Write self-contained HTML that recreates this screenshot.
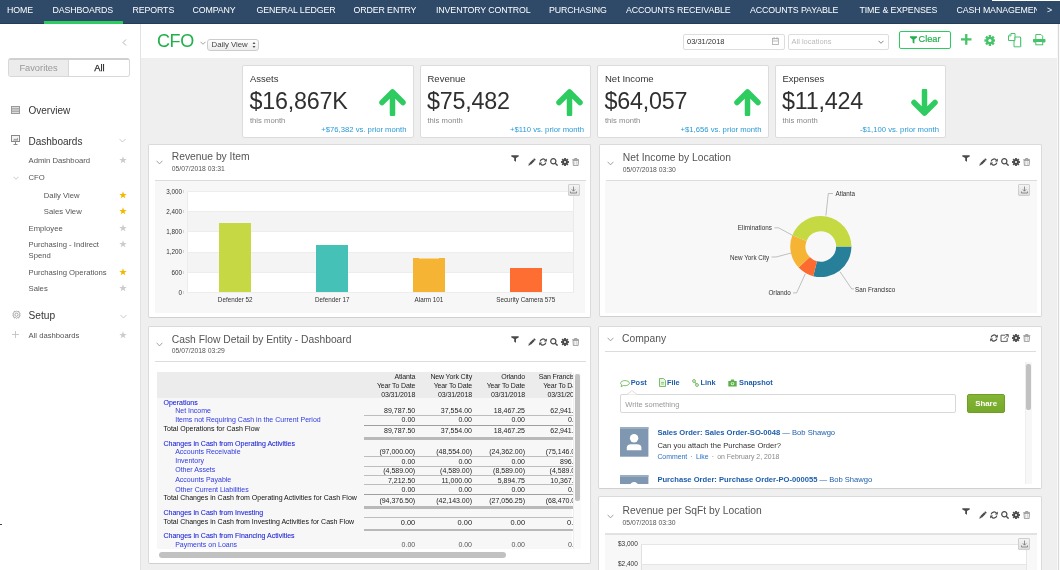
<!DOCTYPE html>
<html><head><meta charset="utf-8">
<style>
*{box-sizing:border-box;margin:0;padding:0}
html,body{width:1060px;height:570px;overflow:hidden;background:#fff;font-family:"Liberation Sans",sans-serif;color:#333}
.abs{position:absolute}
#nav{position:absolute;left:0;top:0;width:1060px;height:24px;background:#2e4a68;border-bottom:1px solid #233c58}
#nav span{position:absolute;top:5px;color:#fff;font-size:8.8px;line-height:10px;white-space:nowrap;letter-spacing:-0.1px}
#navline{position:absolute;left:44px;top:21px;width:79px;height:3px;background:#2ecc60}
#side{position:absolute;left:0;top:24px;width:141px;height:546px;background:#fff;border-right:1px solid #e3e3e3}
#head{position:absolute;left:141px;top:24px;width:919px;height:34px;background:#fff}
#content{position:absolute;left:141px;top:58px;width:919px;height:512px;background:#efefef}
.card{position:absolute;top:65px;width:171.5px;height:73px;background:#fff;border:1px solid #dcdcdc;border-radius:2px}
.card .t{position:absolute;left:7px;top:8px;font-size:9.5px;line-height:1;color:#333}
.card .v{position:absolute;left:6.5px;top:21.8px;font-size:23.3px;color:#303030;letter-spacing:-0.2px}
.card .m{position:absolute;left:7px;top:49.5px;font-size:7.65px;color:#888}
.card .c{position:absolute;right:6px;top:58.5px;font-size:7.7px;color:#2a9ad6;white-space:nowrap}
.card svg{position:absolute;left:135.8px;top:22.5px}
.panel{position:absolute;background:#fff;border:1px solid #dcdcdc;border-radius:2px}
.ptitle{position:absolute;left:24px;top:7px;font-size:11px;color:#555;white-space:nowrap}
.pdate{position:absolute;left:24px;top:20px;font-size:7px;color:#555;white-space:nowrap}
.sep{position:absolute;height:1px;background:#dedede}
</style></head><body><div id="wrap" style="position:absolute;left:0;top:0;width:1060px;height:570px;overflow:hidden;will-change:transform">
<div id="nav">
<span style="left:7px">HOME</span>
<span style="left:52.5px">DASHBOARDS</span>
<span style="left:132.5px">REPORTS</span>
<span style="left:192.5px">COMPANY</span>
<span style="left:256.5px">GENERAL LEDGER</span>
<span style="left:353.5px">ORDER ENTRY</span>
<span style="left:436px">INVENTORY CONTROL</span>
<span style="left:549px">PURCHASING</span>
<span style="left:626px">ACCOUNTS RECEIVABLE</span>
<span style="left:750px">ACCOUNTS PAYABLE</span>
<span style="left:859.5px">TIME &amp; EXPENSES</span>
<span style="left:956.5px;width:80px;overflow:hidden">CASH MANAGEMENT</span>
<span style="left:1047px">&gt;</span>
<div id="navline"></div>
</div>
<div id="side">
<svg class="abs" style="left:122px;top:15px" width="5" height="7" viewBox="0 0 5 7"><path d="M4 0.5L1 3.5L4 6.5" fill="none" stroke="#aaa" stroke-width="0.9"/></svg>
<div class="abs" style="left:8px;top:34px;width:122px;height:18.7px;border:1px solid #d8d8d8;border-top:2px solid #d0d0d0;border-radius:3px;overflow:hidden">
 <div class="abs" style="left:0;top:0;width:60px;height:16px;background:#ececec;border-right:1px solid #d8d8d8;color:#999;font-size:9.3px;text-align:center;line-height:16.5px">Favorites</div>
 <div class="abs" style="left:60px;top:0;width:61px;height:16px;background:#fff;color:#222;font-size:9.3px;text-align:center;line-height:16.5px;-webkit-text-stroke:0.25px #222">All</div>
</div>
<svg class="abs" style="left:11px;top:82px" width="9" height="8" viewBox="0 0 9 8"><rect x="0.5" y="0.5" width="8" height="7" fill="#ddd" stroke="#999"/><path d="M1 2.5H8M1 4H8M1 5.5H8" stroke="#999" stroke-width="0.7"/></svg>
<div class="abs" style="left:28.5px;top:82.3px;font-size:10px;line-height:1;color:#333;white-space:nowrap;">Overview</div>
<svg class="abs" style="left:11px;top:111px" width="9" height="10" viewBox="0 0 9 10"><rect x="0.5" y="0.5" width="8" height="6" fill="#f4f4f4" stroke="#888"/><path d="M2 5L4 3.5L5 4.5L7 2.5V5.5H2Z" fill="#999"/><path d="M4.5 6.5V9.5M2.5 9.5H6.5" stroke="#888"/></svg>
<div class="abs" style="left:28.5px;top:112.6px;font-size:10px;line-height:1;color:#333;white-space:nowrap;">Dashboards</div>
<svg class="abs" style="left:119px;top:114px" width="7" height="5" viewBox="0 0 7 5"><path d="M0.5 1L3.5 4L6.5 1" fill="none" stroke="#bbb" stroke-width="0.8"/></svg>
<div class="abs" style="left:28.5px;top:132.9px;font-size:7.7px;line-height:1;color:#555;white-space:nowrap;">Admin Dashboard</div>
<svg class="abs" style="left:118.5px;top:132.0px" width="8" height="8" viewBox="0 0 10 10"><path d="M5 0.3L6.2 3.6L9.7 3.7L6.9 5.8L7.9 9.2L5 7.2L2.1 9.2L3.1 5.8L0.3 3.7L3.8 3.6Z" fill="#ccc"/></svg>
<div class="abs" style="left:28.5px;top:149.7px;font-size:7.7px;line-height:1;color:#555;white-space:nowrap;">CFO</div>
<div class="abs" style="left:43.8px;top:168.1px;font-size:7.7px;line-height:1;color:#555;white-space:nowrap;">Daily View</div>
<svg class="abs" style="left:118.5px;top:167.2px" width="8" height="8" viewBox="0 0 10 10"><path d="M5 0.3L6.2 3.6L9.7 3.7L6.9 5.8L7.9 9.2L5 7.2L2.1 9.2L3.1 5.8L0.3 3.7L3.8 3.6Z" fill="#f5b800"/></svg>
<div class="abs" style="left:43.8px;top:184.2px;font-size:7.7px;line-height:1;color:#555;white-space:nowrap;">Sales View</div>
<svg class="abs" style="left:118.5px;top:183.3px" width="8" height="8" viewBox="0 0 10 10"><path d="M5 0.3L6.2 3.6L9.7 3.7L6.9 5.8L7.9 9.2L5 7.2L2.1 9.2L3.1 5.8L0.3 3.7L3.8 3.6Z" fill="#f5b800"/></svg>
<div class="abs" style="left:28.5px;top:200.9px;font-size:7.7px;line-height:1;color:#555;white-space:nowrap;">Employee</div>
<svg class="abs" style="left:118.5px;top:200.0px" width="8" height="8" viewBox="0 0 10 10"><path d="M5 0.3L6.2 3.6L9.7 3.7L6.9 5.8L7.9 9.2L5 7.2L2.1 9.2L3.1 5.8L0.3 3.7L3.8 3.6Z" fill="#ccc"/></svg>
<div class="abs" style="left:28.5px;top:217.3px;font-size:7.7px;line-height:1;color:#555;white-space:nowrap;">Purchasing - Indirect</div>
<svg class="abs" style="left:118.5px;top:216.4px" width="8" height="8" viewBox="0 0 10 10"><path d="M5 0.3L6.2 3.6L9.7 3.7L6.9 5.8L7.9 9.2L5 7.2L2.1 9.2L3.1 5.8L0.3 3.7L3.8 3.6Z" fill="#ccc"/></svg>
<div class="abs" style="left:28.5px;top:228.1px;font-size:7.7px;line-height:1;color:#555;white-space:nowrap;">Spend</div>
<div class="abs" style="left:28.5px;top:245.1px;font-size:7.7px;line-height:1;color:#555;white-space:nowrap;">Purchasing Operations</div>
<svg class="abs" style="left:118.5px;top:244.2px" width="8" height="8" viewBox="0 0 10 10"><path d="M5 0.3L6.2 3.6L9.7 3.7L6.9 5.8L7.9 9.2L5 7.2L2.1 9.2L3.1 5.8L0.3 3.7L3.8 3.6Z" fill="#f5b800"/></svg>
<div class="abs" style="left:28.5px;top:261.2px;font-size:7.7px;line-height:1;color:#555;white-space:nowrap;">Sales</div>
<svg class="abs" style="left:118.5px;top:260.3px" width="8" height="8" viewBox="0 0 10 10"><path d="M5 0.3L6.2 3.6L9.7 3.7L6.9 5.8L7.9 9.2L5 7.2L2.1 9.2L3.1 5.8L0.3 3.7L3.8 3.6Z" fill="#ccc"/></svg>
<svg class="abs" style="left:13px;top:152px" width="6" height="4" viewBox="0 0 6 4"><path d="M0.5 0.8L3 3.3L5.5 0.8" fill="none" stroke="#bbb" stroke-width="0.8"/></svg>
<svg class="abs" style="left:11.5px;top:286px" width="9" height="9" viewBox="0 0 9 9"><path d="M4.5 0.8L5.4 1.8L6.8 1.4L7 2.8L8.2 3.6L7.5 4.8L8.2 6L7 6.6L6.8 8L5.4 7.6L4.5 8.4L3.6 7.6L2.2 8L2 6.6L0.8 6L1.5 4.8L0.8 3.6L2 2.8L2.2 1.4L3.6 1.8Z" fill="none" stroke="#888" stroke-width="0.7"/><circle cx="4.5" cy="4.7" r="1.6" fill="none" stroke="#888" stroke-width="0.7"/></svg>
<div class="abs" style="left:28.5px;top:287.2px;font-size:10.2px;line-height:1;color:#333;white-space:nowrap;">Setup</div>
<svg class="abs" style="left:120px;top:290px" width="7" height="5" viewBox="0 0 7 5"><path d="M0.5 1L3.5 4L6.5 1" fill="none" stroke="#bbb" stroke-width="0.8"/></svg>
<svg class="abs" style="left:12px;top:306.5px" width="7" height="7" viewBox="0 0 7 7"><path d="M3.5 0V7M0 3.5H7" stroke="#bbb" stroke-width="0.8"/></svg>
<div class="abs" style="left:28.5px;top:307.7px;font-size:7.7px;line-height:1;color:#555;white-space:nowrap;">All dashboards</div>
<svg class="abs" style="left:118.5px;top:306.8px" width="8" height="8" viewBox="0 0 10 10"><path d="M5 0.3L6.2 3.6L9.7 3.7L6.9 5.8L7.9 9.2L5 7.2L2.1 9.2L3.1 5.8L0.3 3.7L3.8 3.6Z" fill="#ccc"/></svg>

</div>
<div id="head">
<div class="abs" style="left:16px;top:8px;font-size:18px;line-height:1;color:#1fb14a;letter-spacing:-0.4px">CFO</div>
<svg class="abs" style="left:59px;top:17px" width="6" height="4" viewBox="0 0 6 4"><path d="M0.5 0.8L3 3.3L5.5 0.8" fill="none" stroke="#888" stroke-width="0.8"/></svg>
<div class="abs" style="left:66px;top:15px;width:52px;height:12px;border:1px solid #ccc;border-radius:3px;background:linear-gradient(#fdfdfd,#eee);font-size:7.8px;line-height:10px;color:#444;padding-left:3.5px">Daily View</div>
<svg class="abs" style="left:111px;top:17px" width="4" height="8" viewBox="0 0 4 8"><path d="M0.5 3L2 1L3.5 3ZM0.5 5L2 7L3.5 5Z" fill="#555"/></svg>
<div class="abs" style="left:542px;top:9.5px;width:102px;height:16px;border:1px solid #ddd;border-radius:2px;background:#fff;font-size:7.5px;line-height:14px;color:#333;padding-left:3px">03/31/2018</div>
<svg class="abs" style="left:631px;top:13px" width="7" height="8" viewBox="0 0 7 8"><rect x="0.5" y="1.5" width="6" height="6" fill="none" stroke="#aaa" stroke-width="0.8"/><path d="M2 0V2.5M5 0V2.5M1 4H6" stroke="#aaa" stroke-width="0.8"/></svg>
<div class="abs" style="left:646.5px;top:9.5px;width:101px;height:16px;border:1px solid #ddd;border-radius:2px;background:#fff;font-size:7.5px;line-height:14px;color:#bbb;padding-left:3px">All locations</div>
<svg class="abs" style="left:737px;top:16px" width="6" height="4" viewBox="0 0 6 4"><path d="M0.5 0.8L3 3.3L5.5 0.8" fill="none" stroke="#777" stroke-width="0.9"/></svg>
<div class="abs" style="left:757.5px;top:6.5px;width:52px;height:18.5px;border:1.5px solid #2ecc60;border-radius:2px;background:#fff"></div>
<svg class="abs" style="left:768.5px;top:11.5px" width="7" height="8" viewBox="0 0 7 8"><path d="M0 0.2H7V1.6L4.4 3.6V7.8L2.6 6.6V3.6L0 1.6Z" fill="#1fb14a"/></svg>
<div class="abs" style="left:777.5px;top:11px;font-size:9.2px;line-height:1;color:#22b34c;-webkit-text-stroke:0.2px #22b34c">Clear</div>
<svg class="abs" style="left:820px;top:10.3px" width="10.5" height="10.7" viewBox="0 0 10.5 10.7"><path d="M5.25 0V10.7M0 5.35H10.5" stroke="#45c46a" stroke-width="2.3"/></svg>
<svg class="abs" style="left:842.5px;top:10.6px" width="11.8" height="11" viewBox="0 0 12 12"><g fill="#45c46a"><circle cx="6" cy="6" r="4.2"/><rect x="4.7" y="0" width="2.6" height="12"/><rect x="0" y="4.7" width="12" height="2.6"/><rect x="4.7" y="0" width="2.6" height="12" transform="rotate(45 6 6)"/><rect x="4.7" y="0" width="2.6" height="12" transform="rotate(-45 6 6)"/></g><circle cx="6" cy="6" r="1.7" fill="#fff"/></svg>
<svg class="abs" style="left:866.5px;top:9px" width="14.5" height="14.5" viewBox="0 0 14.5 14.5"><g fill="#fff" stroke="#45c46a" stroke-width="1"><path d="M3 0.5H7V7.5H0.5V3Z"/><path d="M7 4H12.5V13.8H6V8L7 7.5Z"/></g><path d="M3 0.5V3H0.5" fill="none" stroke="#45c46a" stroke-width="0.8"/><path d="M13.3 5V14" stroke="#b8e6c6" stroke-width="0.8"/></svg>
<svg class="abs" style="left:892px;top:10.3px" width="12.5" height="11.3" viewBox="0 0 12.5 11.3"><path d="M2.8 5V0.5H8L9.7 2.2V5" fill="#fff" stroke="#45c46a" stroke-width="1"/><rect x="0" y="5" width="12.5" height="3.4" rx="0.8" fill="#45c46a"/><rect x="2.8" y="7.5" width="6.9" height="3.3" fill="#fff" stroke="#45c46a" stroke-width="1"/></svg>
</div>
<div id="content"></div>
<div class="card" style="left:242px"><div class="t">Assets</div><div class="v">$16,867K</div><div class="m">this month</div><div class="c">+$76,382 vs. prior month</div><svg width="27" height="27" viewBox="0 0 27 27"><path d="M13.5 3L3 13.5M13.5 3L24 13.5M13.5 3V25" fill="none" stroke="#2ecc60" stroke-width="5.5" stroke-linecap="round" stroke-linejoin="round"/></svg></div>
<div class="card" style="left:419.5px"><div class="t">Revenue</div><div class="v">$75,482</div><div class="m">this month</div><div class="c">+$110 vs. prior month</div><svg width="27" height="27" viewBox="0 0 27 27"><path d="M13.5 3L3 13.5M13.5 3L24 13.5M13.5 3V25" fill="none" stroke="#2ecc60" stroke-width="5.5" stroke-linecap="round" stroke-linejoin="round"/></svg></div>
<div class="card" style="left:597px"><div class="t">Net Income</div><div class="v">$64,057</div><div class="m">this month</div><div class="c">+$1,656 vs. prior month</div><svg width="27" height="27" viewBox="0 0 27 27"><path d="M13.5 3L3 13.5M13.5 3L24 13.5M13.5 3V25" fill="none" stroke="#2ecc60" stroke-width="5.5" stroke-linecap="round" stroke-linejoin="round"/></svg></div>
<div class="card" style="left:774.5px"><div class="t">Expenses</div><div class="v">$11,424</div><div class="m">this month</div><div class="c">-$1,100 vs. prior month</div><svg width="27" height="27" viewBox="0 0 27 27"><path d="M13.5 24L3 13.5M13.5 24L24 13.5M13.5 24V2" fill="none" stroke="#2ecc60" stroke-width="5.5" stroke-linecap="round" stroke-linejoin="round"/></svg></div>
<!--PANELS-->
<div class="abs" style="left:147.5px;top:143.5px;width:443.8px;height:174.0px;background:#fff;border:1px solid #dadada;border-bottom-color:#d0d0d0;border-radius:2px"></div>
<svg class="abs" style="left:156.0px;top:160.1px" width="7" height="5" viewBox="0 0 7 5"><path d="M0.6 0.8L3.5 3.9L6.4 0.8" fill="none" stroke="#888" stroke-width="0.8"/></svg>
<div class="abs" style="left:171.8px;top:152.4px;font-size:10.3px;line-height:1;color:#555;white-space:nowrap;">Revenue by Item</div>
<div class="abs" style="left:171.8px;top:166.4px;font-size:6.8px;line-height:1;color:#555;white-space:nowrap;">05/07/2018 03:31</div>
<div class="abs" style="left:154.5px;top:180.0px;width:431.3px;height:1.0px;background:#dcdcdc"></div>
<svg class="abs" style="left:511.3px;top:155.0px" width="8" height="7" viewBox="0 0 8 7"><path d="M0.3 0.2H7.7V1.6L5 3V6.8L3.2 5.8V3L0.3 1.6Z" fill="#4a4a4a"/></svg>
<svg class="abs" style="left:527.8px;top:158.0px" width="8" height="8" viewBox="0 0 8 8"><path d="M6.2 0.2L7.8 1.8L2.8 6.8L0.2 7.8L1.2 5.2Z" fill="#4a4a4a"/><path d="M1.3 5.3L2.7 6.7M5.2 1.2L6.8 2.8" stroke="#fff" stroke-width="0.45"/></svg>
<svg class="abs" style="left:538.8px;top:158.0px" width="8" height="8" viewBox="0 0 8 8"><path d="M1.2 3.3A2.9 2.9 0 0 1 6.4 2.2" fill="none" stroke="#4a4a4a" stroke-width="1.3"/><path d="M7.8 0.6V3.6H4.8Z" fill="#4a4a4a"/><path d="M6.8 4.7A2.9 2.9 0 0 1 1.6 5.8" fill="none" stroke="#4a4a4a" stroke-width="1.3"/><path d="M0.2 7.4V4.4H3.2Z" fill="#4a4a4a"/></svg>
<svg class="abs" style="left:549.8px;top:158.0px" width="8" height="8" viewBox="0 0 8 8"><circle cx="3.3" cy="3.3" r="2.6" fill="none" stroke="#4a4a4a" stroke-width="1.2"/><path d="M5.2 5.2L7.6 7.6" stroke="#4a4a4a" stroke-width="1.4"/></svg>
<svg class="abs" style="left:560.8px;top:158.0px" width="8" height="8" viewBox="0 0 8 8"><g fill="#4a4a4a"><circle cx="4" cy="4" r="2.6"/><rect x="3.1" y="0" width="1.8" height="8"/><rect x="0" y="3.1" width="8" height="1.8"/><rect x="3.1" y="0" width="1.8" height="8" transform="rotate(45 4 4)"/><rect x="3.1" y="0" width="1.8" height="8" transform="rotate(-45 4 4)"/></g><circle cx="4" cy="4" r="1" fill="#fff"/></svg>
<svg class="abs" style="left:571.8px;top:158.0px" width="7.5" height="8" viewBox="0 0 7.5 8"><path d="M0.2 1.7H7.3M2.6 1.5V0.5H4.9V1.5" fill="none" stroke="#888" stroke-width="0.8"/><path d="M1 2.4H6.5L6.1 7.6H1.4Z" fill="none" stroke="#888" stroke-width="0.8"/><path d="M2.8 3.2V6.8M4.7 3.2V6.8" stroke="#aaa" stroke-width="0.6"/></svg>
<div class="abs" style="left:154.5px;top:181.0px;width:430.5px;height:131.5px;background:#f7f7f7"></div>
<div class="abs" style="left:186.5px;top:191.0px;width:387.9px;height:101.0px;background:#fff;border-right:1px solid #e9e9e9;border-left:1px solid #ececec"></div>
<div class="abs" style="left:187.5px;top:211.2px;width:385.9px;height:20.2px;background:#f4f4f4"></div>
<div class="abs" style="left:187.5px;top:251.6px;width:385.9px;height:20.2px;background:#f4f4f4"></div>
<div class="abs" style="left:186.5px;top:191.0px;width:387.9px;height:0.8px;background:#ededed"></div>
<div class="abs" style="left:182.6px;top:189.8px;width:0.7px;height:3.0px;background:#d5d5d5"></div>
<div class="abs" style="left:186.5px;top:211.2px;width:387.9px;height:0.8px;background:#ededed"></div>
<div class="abs" style="left:182.6px;top:210.0px;width:0.7px;height:3.0px;background:#d5d5d5"></div>
<div class="abs" style="left:186.5px;top:231.4px;width:387.9px;height:0.8px;background:#ededed"></div>
<div class="abs" style="left:182.6px;top:230.2px;width:0.7px;height:3.0px;background:#d5d5d5"></div>
<div class="abs" style="left:186.5px;top:251.6px;width:387.9px;height:0.8px;background:#ededed"></div>
<div class="abs" style="left:182.6px;top:250.4px;width:0.7px;height:3.0px;background:#d5d5d5"></div>
<div class="abs" style="left:186.5px;top:271.8px;width:387.9px;height:0.8px;background:#ededed"></div>
<div class="abs" style="left:182.6px;top:270.6px;width:0.7px;height:3.0px;background:#d5d5d5"></div>
<div class="abs" style="left:186.5px;top:292.0px;width:387.9px;height:0.8px;background:#ededed"></div>
<div class="abs" style="left:182.6px;top:290.8px;width:0.7px;height:3.0px;background:#d5d5d5"></div>
<div class="abs" style="right:878.1px;top:188.8px;font-size:6.3px;line-height:1;color:#333;white-space:nowrap;text-align:right;">3,000</div>
<div class="abs" style="right:878.1px;top:209.0px;font-size:6.3px;line-height:1;color:#333;white-space:nowrap;text-align:right;">2,400</div>
<div class="abs" style="right:878.1px;top:229.2px;font-size:6.3px;line-height:1;color:#333;white-space:nowrap;text-align:right;">1,800</div>
<div class="abs" style="right:878.1px;top:249.4px;font-size:6.3px;line-height:1;color:#333;white-space:nowrap;text-align:right;">1,200</div>
<div class="abs" style="right:878.1px;top:269.6px;font-size:6.3px;line-height:1;color:#333;white-space:nowrap;text-align:right;">600</div>
<div class="abs" style="right:878.1px;top:289.8px;font-size:6.3px;line-height:1;color:#333;white-space:nowrap;text-align:right;">0</div>
<div class="abs" style="left:219.4px;top:223.4px;width:31.6px;height:68.6px;background:#c6d843"></div>
<div class="abs" style="left:135.2px;width:200px;top:296.9px;font-size:6.3px;line-height:1;color:#333;white-space:nowrap;text-align:center;">Defender 52</div>
<div class="abs" style="left:316.4px;top:244.5px;width:31.8px;height:47.5px;background:#45c1b7"></div>
<div class="abs" style="left:232.3px;width:200px;top:296.9px;font-size:6.3px;line-height:1;color:#333;white-space:nowrap;text-align:center;">Defender 17</div>
<div class="abs" style="left:413.0px;top:258.2px;width:31.7px;height:33.8px;background:#f5b434"></div>
<div class="abs" style="left:328.9px;width:200px;top:296.9px;font-size:6.3px;line-height:1;color:#333;white-space:nowrap;text-align:center;">Alarm 101</div>
<div class="abs" style="left:510.0px;top:267.8px;width:31.6px;height:24.2px;background:#fe6d32"></div>
<div class="abs" style="left:425.8px;width:200px;top:296.9px;font-size:6.3px;line-height:1;color:#333;white-space:nowrap;text-align:center;">Security Camera 575</div>
<div class="abs" style="left:419.0px;top:257.6px;width:20.0px;height:1.0px;background:#f9d690"></div>
<div class="abs" style="left:567.5px;top:184.4px;width:12.0px;height:11.9px;background:linear-gradient(#f4f4f4,#dedede);border:1px solid #cfcfcf;border-radius:1px"></div>
<svg class="abs" style="left:570.0px;top:186.4px" width="7" height="8" viewBox="0 0 7 8"><path d="M3.5 0.5V5M1.8 3.4L3.5 5.2L5.2 3.4M0.5 5.5V7H6.5V5.5" fill="none" stroke="#777" stroke-width="0.8"/></svg>
<div class="abs" style="left:598.5px;top:144.2px;width:443.8px;height:173.3px;background:#fff;border:1px solid #dadada;border-bottom-color:#d0d0d0;border-radius:2px"></div>
<svg class="abs" style="left:607.0px;top:160.7px" width="7" height="5" viewBox="0 0 7 5"><path d="M0.6 0.8L3.5 3.9L6.4 0.8" fill="none" stroke="#888" stroke-width="0.8"/></svg>
<div class="abs" style="left:622.8px;top:153.0px;font-size:10.3px;line-height:1;color:#555;white-space:nowrap;">Net Income by Location</div>
<div class="abs" style="left:622.8px;top:166.8px;font-size:6.8px;line-height:1;color:#555;white-space:nowrap;">05/07/2018 03:30</div>
<div class="abs" style="left:605.5px;top:180.0px;width:431.3px;height:1.0px;background:#dcdcdc"></div>
<svg class="abs" style="left:962.3px;top:155.3px" width="8" height="7" viewBox="0 0 8 7"><path d="M0.3 0.2H7.7V1.6L5 3V6.8L3.2 5.8V3L0.3 1.6Z" fill="#4a4a4a"/></svg>
<svg class="abs" style="left:978.8px;top:157.8px" width="8" height="8" viewBox="0 0 8 8"><path d="M6.2 0.2L7.8 1.8L2.8 6.8L0.2 7.8L1.2 5.2Z" fill="#4a4a4a"/><path d="M1.3 5.3L2.7 6.7M5.2 1.2L6.8 2.8" stroke="#fff" stroke-width="0.45"/></svg>
<svg class="abs" style="left:989.8px;top:157.8px" width="8" height="8" viewBox="0 0 8 8"><path d="M1.2 3.3A2.9 2.9 0 0 1 6.4 2.2" fill="none" stroke="#4a4a4a" stroke-width="1.3"/><path d="M7.8 0.6V3.6H4.8Z" fill="#4a4a4a"/><path d="M6.8 4.7A2.9 2.9 0 0 1 1.6 5.8" fill="none" stroke="#4a4a4a" stroke-width="1.3"/><path d="M0.2 7.4V4.4H3.2Z" fill="#4a4a4a"/></svg>
<svg class="abs" style="left:1000.8px;top:157.8px" width="8" height="8" viewBox="0 0 8 8"><circle cx="3.3" cy="3.3" r="2.6" fill="none" stroke="#4a4a4a" stroke-width="1.2"/><path d="M5.2 5.2L7.6 7.6" stroke="#4a4a4a" stroke-width="1.4"/></svg>
<svg class="abs" style="left:1011.8px;top:157.8px" width="8" height="8" viewBox="0 0 8 8"><g fill="#4a4a4a"><circle cx="4" cy="4" r="2.6"/><rect x="3.1" y="0" width="1.8" height="8"/><rect x="0" y="3.1" width="8" height="1.8"/><rect x="3.1" y="0" width="1.8" height="8" transform="rotate(45 4 4)"/><rect x="3.1" y="0" width="1.8" height="8" transform="rotate(-45 4 4)"/></g><circle cx="4" cy="4" r="1" fill="#fff"/></svg>
<svg class="abs" style="left:1022.8px;top:157.8px" width="7.5" height="8" viewBox="0 0 7.5 8"><path d="M0.2 1.7H7.3M2.6 1.5V0.5H4.9V1.5" fill="none" stroke="#888" stroke-width="0.8"/><path d="M1 2.4H6.5L6.1 7.6H1.4Z" fill="none" stroke="#888" stroke-width="0.8"/><path d="M2.8 3.2V6.8M4.7 3.2V6.8" stroke="#aaa" stroke-width="0.6"/></svg>
<div class="abs" style="left:605.0px;top:181.0px;width:431.6px;height:131.6px;background:#f8f8f8"></div>
<div class="abs" style="left:1018.4px;top:184.2px;width:11.6px;height:12.1px;background:linear-gradient(#f4f4f4,#dedede);border:1px solid #cfcfcf;border-radius:1px"></div>
<svg class="abs" style="left:1020.9px;top:186.2px" width="7" height="8" viewBox="0 0 7 8"><path d="M3.5 0.5V5M1.8 3.4L3.5 5.2L5.2 3.4M0.5 5.5V7H6.5V5.5" fill="none" stroke="#777" stroke-width="0.8"/></svg>
<svg class="abs" style="left:0;top:0" width="1060" height="570" viewBox="0 0 1060 570"><path d="M851.45 246.50A30.6 30.6 0 0 1 813.19 276.13L817.02 261.31A15.3 15.3 0 0 0 836.15 246.50Z" fill="#287f9a"/><path d="M813.19 276.13A30.6 30.6 0 0 1 798.65 267.56L809.75 257.03A15.3 15.3 0 0 0 817.02 261.31Z" fill="#fd6b31"/><path d="M798.65 267.56A30.6 30.6 0 0 1 792.38 235.29L806.61 240.89A15.3 15.3 0 0 0 809.75 257.03Z" fill="#f5b434"/><path d="M792.38 235.29A30.6 30.6 0 0 1 851.45 246.50L836.15 246.50A15.3 15.3 0 0 0 806.61 240.89Z" fill="#c5d943"/><g fill="none" stroke="#999" stroke-width="0.6"><path d="M825.9 215.5L828.3 193.5H833"/><path d="M774.4 227.8H778.5L792.6 235.4"/><path d="M771.5 257H776L791.2 253"/><path d="M793 292.9H796.6L805.3 273.8"/><path d="M840 271.7L851.7 288.9H854"/></g></svg>
<div class="abs" style="left:835.5px;top:191.1px;font-size:6.3px;line-height:1;color:#333;white-space:nowrap;">Atlanta</div>
<div class="abs" style="right:288.2px;top:225.3px;font-size:6.3px;line-height:1;color:#333;white-space:nowrap;text-align:right;">Eliminations</div>
<div class="abs" style="right:290.8px;top:254.5px;font-size:6.3px;line-height:1;color:#333;white-space:nowrap;text-align:right;">New York City</div>
<div class="abs" style="right:269.2px;top:290.4px;font-size:6.3px;line-height:1;color:#333;white-space:nowrap;text-align:right;">Orlando</div>
<div class="abs" style="left:855.0px;top:286.7px;font-size:6.3px;line-height:1;color:#333;white-space:nowrap;">San Francisco</div>
<div class="abs" style="left:147.5px;top:325.6px;width:443.5px;height:238.9px;background:#fff;border:1px solid #dadada;border-bottom-color:#d0d0d0;border-radius:2px"></div>
<svg class="abs" style="left:156.0px;top:342.2px" width="7" height="5" viewBox="0 0 7 5"><path d="M0.6 0.8L3.5 3.9L6.4 0.8" fill="none" stroke="#888" stroke-width="0.8"/></svg>
<div class="abs" style="left:171.8px;top:334.5px;font-size:10.3px;line-height:1;color:#555;white-space:nowrap;">Cash Flow Detail by Entity - Dashboard</div>
<div class="abs" style="left:171.8px;top:347.5px;font-size:6.8px;line-height:1;color:#555;white-space:nowrap;">05/07/2018 03:29</div>
<div class="abs" style="left:154.5px;top:361.3px;width:431.0px;height:1.0px;background:#dcdcdc"></div>
<svg class="abs" style="left:511.0px;top:335.5px" width="8" height="7" viewBox="0 0 8 7"><path d="M0.3 0.2H7.7V1.6L5 3V6.8L3.2 5.8V3L0.3 1.6Z" fill="#4a4a4a"/></svg>
<svg class="abs" style="left:527.5px;top:338.0px" width="8" height="8" viewBox="0 0 8 8"><path d="M6.2 0.2L7.8 1.8L2.8 6.8L0.2 7.8L1.2 5.2Z" fill="#4a4a4a"/><path d="M1.3 5.3L2.7 6.7M5.2 1.2L6.8 2.8" stroke="#fff" stroke-width="0.45"/></svg>
<svg class="abs" style="left:538.5px;top:338.0px" width="8" height="8" viewBox="0 0 8 8"><path d="M1.2 3.3A2.9 2.9 0 0 1 6.4 2.2" fill="none" stroke="#4a4a4a" stroke-width="1.3"/><path d="M7.8 0.6V3.6H4.8Z" fill="#4a4a4a"/><path d="M6.8 4.7A2.9 2.9 0 0 1 1.6 5.8" fill="none" stroke="#4a4a4a" stroke-width="1.3"/><path d="M0.2 7.4V4.4H3.2Z" fill="#4a4a4a"/></svg>
<svg class="abs" style="left:549.5px;top:338.0px" width="8" height="8" viewBox="0 0 8 8"><circle cx="3.3" cy="3.3" r="2.6" fill="none" stroke="#4a4a4a" stroke-width="1.2"/><path d="M5.2 5.2L7.6 7.6" stroke="#4a4a4a" stroke-width="1.4"/></svg>
<svg class="abs" style="left:560.5px;top:338.0px" width="8" height="8" viewBox="0 0 8 8"><g fill="#4a4a4a"><circle cx="4" cy="4" r="2.6"/><rect x="3.1" y="0" width="1.8" height="8"/><rect x="0" y="3.1" width="8" height="1.8"/><rect x="3.1" y="0" width="1.8" height="8" transform="rotate(45 4 4)"/><rect x="3.1" y="0" width="1.8" height="8" transform="rotate(-45 4 4)"/></g><circle cx="4" cy="4" r="1" fill="#fff"/></svg>
<svg class="abs" style="left:571.5px;top:338.0px" width="7.5" height="8" viewBox="0 0 7.5 8"><path d="M0.2 1.7H7.3M2.6 1.5V0.5H4.9V1.5" fill="none" stroke="#888" stroke-width="0.8"/><path d="M1 2.4H6.5L6.1 7.6H1.4Z" fill="none" stroke="#888" stroke-width="0.8"/><path d="M2.8 3.2V6.8M4.7 3.2V6.8" stroke="#aaa" stroke-width="0.6"/></svg>
<div class="abs" style="left:157.2px;top:372.2px;width:415.3px;height:176.8px;background:#f7f7f7"></div>
<div class="abs" style="left:157.2px;top:372.2px;width:415.3px;height:25.8px;background:#ececec"></div>
<div class="abs" style="left:157px;top:372px;width:415.5px;height:177px;overflow:hidden">
<div class="abs" style="left:108.2px;width:150px;top:0.9px;font-size:7px;line-height:1;color:#222;white-space:nowrap;text-align:right;letter-spacing:-0.15px">Atlanta</div>
<div class="abs" style="left:108.2px;width:150px;top:9.6px;font-size:7px;line-height:1;color:#222;white-space:nowrap;text-align:right;letter-spacing:-0.15px">Year To Date</div>
<div class="abs" style="left:108.2px;width:150px;top:18.6px;font-size:7px;line-height:1;color:#222;white-space:nowrap;text-align:right;letter-spacing:-0.1px">03/31/2018</div>
<div class="abs" style="left:165.0px;width:150px;top:0.9px;font-size:7px;line-height:1;color:#222;white-space:nowrap;text-align:right;letter-spacing:-0.15px">New York City</div>
<div class="abs" style="left:165.0px;width:150px;top:9.6px;font-size:7px;line-height:1;color:#222;white-space:nowrap;text-align:right;letter-spacing:-0.15px">Year To Date</div>
<div class="abs" style="left:165.0px;width:150px;top:18.6px;font-size:7px;line-height:1;color:#222;white-space:nowrap;text-align:right;letter-spacing:-0.1px">03/31/2018</div>
<div class="abs" style="left:218.0px;width:150px;top:0.9px;font-size:7px;line-height:1;color:#222;white-space:nowrap;text-align:right;letter-spacing:-0.15px">Orlando</div>
<div class="abs" style="left:218.0px;width:150px;top:9.6px;font-size:7px;line-height:1;color:#222;white-space:nowrap;text-align:right;letter-spacing:-0.15px">Year To Date</div>
<div class="abs" style="left:218.0px;width:150px;top:18.6px;font-size:7px;line-height:1;color:#222;white-space:nowrap;text-align:right;letter-spacing:-0.1px">03/31/2018</div>
<div class="abs" style="left:274.5px;width:150px;top:0.9px;font-size:7px;line-height:1;color:#222;white-space:nowrap;text-align:right;letter-spacing:-0.15px">San Francisco</div>
<div class="abs" style="left:274.5px;width:150px;top:9.6px;font-size:7px;line-height:1;color:#222;white-space:nowrap;text-align:right;letter-spacing:-0.15px">Year To Date</div>
<div class="abs" style="left:274.5px;width:150px;top:18.6px;font-size:7px;line-height:1;color:#222;white-space:nowrap;text-align:right;letter-spacing:-0.1px">03/31/2018</div>
<div class="abs" style="left:6.5px;top:26.5px;font-size:7px;line-height:1;color:#1d24d6;white-space:nowrap;-webkit-text-stroke:0.08px #1d24d6">Operations</div>
<div class="abs" style="left:18.19999999999999px;top:35.4px;font-size:7px;line-height:1;color:#2f3ae0;white-space:nowrap">Net Income</div>
<div class="abs" style="left:108.2px;width:150px;top:35.4px;font-size:7px;line-height:1;color:#222;white-space:nowrap;text-align:right;">89,787.50</div>
<div class="abs" style="left:165.0px;width:150px;top:35.4px;font-size:7px;line-height:1;color:#222;white-space:nowrap;text-align:right;">37,554.00</div>
<div class="abs" style="left:218.0px;width:150px;top:35.4px;font-size:7px;line-height:1;color:#222;white-space:nowrap;text-align:right;">18,467.25</div>
<div class="abs" style="left:274.5px;width:150px;top:35.4px;font-size:7px;line-height:1;color:#222;white-space:nowrap;text-align:right;">62,941.00</div>
<div class="abs" style="left:206.8px;top:42.6px;width:236.2px;height:1.0px;background:#bdbdbd"></div>
<div class="abs" style="left:18.19999999999999px;top:44.3px;font-size:7px;line-height:1;color:#2f3ae0;white-space:nowrap">Items not Requiring Cash in the Current Period</div>
<div class="abs" style="left:108.2px;width:150px;top:44.3px;font-size:7px;line-height:1;color:#222;white-space:nowrap;text-align:right;">0.00</div>
<div class="abs" style="left:165.0px;width:150px;top:44.3px;font-size:7px;line-height:1;color:#222;white-space:nowrap;text-align:right;">0.00</div>
<div class="abs" style="left:218.0px;width:150px;top:44.3px;font-size:7px;line-height:1;color:#222;white-space:nowrap;text-align:right;">0.00</div>
<div class="abs" style="left:274.5px;width:150px;top:44.3px;font-size:7px;line-height:1;color:#222;white-space:nowrap;text-align:right;">0.00</div>
<div class="abs" style="left:206.8px;top:52.6px;width:236.2px;height:1.4px;background:#9f9f9f"></div>
<div class="abs" style="left:6.5px;top:53.2px;font-size:7px;line-height:1;color:#111;white-space:nowrap">Total Operations for Cash Flow</div>
<div class="abs" style="left:108.2px;width:150px;top:55.3px;font-size:7px;line-height:1;color:#222;white-space:nowrap;text-align:right;">89,787.50</div>
<div class="abs" style="left:165.0px;width:150px;top:55.3px;font-size:7px;line-height:1;color:#222;white-space:nowrap;text-align:right;">37,554.00</div>
<div class="abs" style="left:218.0px;width:150px;top:55.3px;font-size:7px;line-height:1;color:#222;white-space:nowrap;text-align:right;">18,467.25</div>
<div class="abs" style="left:274.5px;width:150px;top:55.3px;font-size:7px;line-height:1;color:#222;white-space:nowrap;text-align:right;">62,941.00</div>
<div class="abs" style="left:206.8px;top:65.3px;width:236.2px;height:2.3px;background:#b9b9b9"></div>
<div class="abs" style="left:6.5px;top:68.0px;font-size:7px;line-height:1;color:#1d24d6;white-space:nowrap;-webkit-text-stroke:0.08px #1d24d6">Changes in Cash from Operating Activities</div>
<div class="abs" style="left:18.19999999999999px;top:76.1px;font-size:7px;line-height:1;color:#2f3ae0;white-space:nowrap">Accounts Receivable</div>
<div class="abs" style="left:108.2px;width:150px;top:76.2px;font-size:7px;line-height:1;color:#222;white-space:nowrap;text-align:right;">(97,000.00)</div>
<div class="abs" style="left:165.0px;width:150px;top:76.2px;font-size:7px;line-height:1;color:#222;white-space:nowrap;text-align:right;">(48,554.00)</div>
<div class="abs" style="left:218.0px;width:150px;top:76.2px;font-size:7px;line-height:1;color:#222;white-space:nowrap;text-align:right;">(24,362.00)</div>
<div class="abs" style="left:274.5px;width:150px;top:76.2px;font-size:7px;line-height:1;color:#222;white-space:nowrap;text-align:right;">(75,146.00)</div>
<div class="abs" style="left:206.8px;top:84.2px;width:236.2px;height:1.0px;background:#bdbdbd"></div>
<div class="abs" style="left:18.19999999999999px;top:85.3px;font-size:7px;line-height:1;color:#2f3ae0;white-space:nowrap">Inventory</div>
<div class="abs" style="left:108.2px;width:150px;top:85.5px;font-size:7px;line-height:1;color:#222;white-space:nowrap;text-align:right;">0.00</div>
<div class="abs" style="left:165.0px;width:150px;top:85.5px;font-size:7px;line-height:1;color:#222;white-space:nowrap;text-align:right;">0.00</div>
<div class="abs" style="left:218.0px;width:150px;top:85.5px;font-size:7px;line-height:1;color:#222;white-space:nowrap;text-align:right;">0.00</div>
<div class="abs" style="left:274.5px;width:150px;top:85.5px;font-size:7px;line-height:1;color:#222;white-space:nowrap;text-align:right;">896.00</div>
<div class="abs" style="left:206.8px;top:93.6px;width:236.2px;height:1.0px;background:#bdbdbd"></div>
<div class="abs" style="left:18.19999999999999px;top:94.4px;font-size:7px;line-height:1;color:#2f3ae0;white-space:nowrap">Other Assets</div>
<div class="abs" style="left:108.2px;width:150px;top:94.7px;font-size:7px;line-height:1;color:#222;white-space:nowrap;text-align:right;">(4,589.00)</div>
<div class="abs" style="left:165.0px;width:150px;top:94.7px;font-size:7px;line-height:1;color:#222;white-space:nowrap;text-align:right;">(4,589.00)</div>
<div class="abs" style="left:218.0px;width:150px;top:94.7px;font-size:7px;line-height:1;color:#222;white-space:nowrap;text-align:right;">(8,589.00)</div>
<div class="abs" style="left:274.5px;width:150px;top:94.7px;font-size:7px;line-height:1;color:#222;white-space:nowrap;text-align:right;">(4,589.00)</div>
<div class="abs" style="left:206.8px;top:103.2px;width:236.2px;height:1.0px;background:#bdbdbd"></div>
<div class="abs" style="left:18.19999999999999px;top:104.2px;font-size:7px;line-height:1;color:#2f3ae0;white-space:nowrap">Accounts Payable</div>
<div class="abs" style="left:108.2px;width:150px;top:104.6px;font-size:7px;line-height:1;color:#222;white-space:nowrap;text-align:right;">7,212.50</div>
<div class="abs" style="left:165.0px;width:150px;top:104.6px;font-size:7px;line-height:1;color:#222;white-space:nowrap;text-align:right;">11,000.00</div>
<div class="abs" style="left:218.0px;width:150px;top:104.6px;font-size:7px;line-height:1;color:#222;white-space:nowrap;text-align:right;">5,894.75</div>
<div class="abs" style="left:274.5px;width:150px;top:104.6px;font-size:7px;line-height:1;color:#222;white-space:nowrap;text-align:right;">10,367.00</div>
<div class="abs" style="left:206.8px;top:112.3px;width:236.2px;height:1.0px;background:#bdbdbd"></div>
<div class="abs" style="left:18.19999999999999px;top:113.6px;font-size:7px;line-height:1;color:#2f3ae0;white-space:nowrap">Other Current Liabilities</div>
<div class="abs" style="left:108.2px;width:150px;top:113.5px;font-size:7px;line-height:1;color:#222;white-space:nowrap;text-align:right;">0.00</div>
<div class="abs" style="left:165.0px;width:150px;top:113.5px;font-size:7px;line-height:1;color:#222;white-space:nowrap;text-align:right;">0.00</div>
<div class="abs" style="left:218.0px;width:150px;top:113.5px;font-size:7px;line-height:1;color:#222;white-space:nowrap;text-align:right;">0.00</div>
<div class="abs" style="left:274.5px;width:150px;top:113.5px;font-size:7px;line-height:1;color:#222;white-space:nowrap;text-align:right;">0.00</div>
<div class="abs" style="left:206.8px;top:121.6px;width:236.2px;height:1.4px;background:#9f9f9f"></div>
<div class="abs" style="left:6.5px;top:122.4px;font-size:7px;line-height:1;color:#111;white-space:nowrap">Total Changes in Cash from Operating Activities for Cash Flow</div>
<div class="abs" style="left:108.2px;width:150px;top:124.8px;font-size:7px;line-height:1;color:#222;white-space:nowrap;text-align:right;">(94,376.50)</div>
<div class="abs" style="left:165.0px;width:150px;top:124.8px;font-size:7px;line-height:1;color:#222;white-space:nowrap;text-align:right;">(42,143.00)</div>
<div class="abs" style="left:218.0px;width:150px;top:124.8px;font-size:7px;line-height:1;color:#222;white-space:nowrap;text-align:right;">(27,056.25)</div>
<div class="abs" style="left:274.5px;width:150px;top:124.8px;font-size:7px;line-height:1;color:#222;white-space:nowrap;text-align:right;">(68,470.00)</div>
<div class="abs" style="left:206.8px;top:134.3px;width:236.2px;height:2.3px;background:#b9b9b9"></div>
<div class="abs" style="left:6.5px;top:136.9px;font-size:7px;line-height:1;color:#1d24d6;white-space:nowrap;-webkit-text-stroke:0.08px #1d24d6">Changes in Cash from Investing</div>
<div class="abs" style="left:206.8px;top:144.9px;width:236.2px;height:1.0px;background:#bdbdbd"></div>
<div class="abs" style="left:6.5px;top:146.0px;font-size:7px;line-height:1;color:#111;white-space:nowrap">Total Changes in Cash from Investing Activities for Cash Flow</div>
<div class="abs" style="left:108.2px;width:150px;top:147.2px;font-size:7.4px;line-height:1;color:#222;white-space:nowrap;text-align:right;">0.00</div>
<div class="abs" style="left:165.0px;width:150px;top:147.2px;font-size:7.4px;line-height:1;color:#222;white-space:nowrap;text-align:right;">0.00</div>
<div class="abs" style="left:218.0px;width:150px;top:147.2px;font-size:7.4px;line-height:1;color:#222;white-space:nowrap;text-align:right;">0.00</div>
<div class="abs" style="left:274.5px;width:150px;top:147.2px;font-size:7.4px;line-height:1;color:#222;white-space:nowrap;text-align:right;">0.00</div>
<div class="abs" style="left:206.8px;top:157.2px;width:236.2px;height:2.3px;background:#b9b9b9"></div>
<div class="abs" style="left:6.5px;top:159.8px;font-size:7px;line-height:1;color:#1d24d6;white-space:nowrap;-webkit-text-stroke:0.08px #1d24d6">Changes in Cash from Financing Activities</div>
<div class="abs" style="left:18.19999999999999px;top:168.8px;font-size:7px;line-height:1;color:#2f3ae0;white-space:nowrap">Payments on Loans</div>
<div class="abs" style="left:108.2px;width:150px;top:168.5px;font-size:7px;line-height:1;color:#555;white-space:nowrap;text-align:right;">0.00</div>
<div class="abs" style="left:165.0px;width:150px;top:168.5px;font-size:7px;line-height:1;color:#555;white-space:nowrap;text-align:right;">0.00</div>
<div class="abs" style="left:218.0px;width:150px;top:168.5px;font-size:7px;line-height:1;color:#555;white-space:nowrap;text-align:right;">0.00</div>
<div class="abs" style="left:274.5px;width:150px;top:168.5px;font-size:7px;line-height:1;color:#555;white-space:nowrap;text-align:right;">0.00</div>
<div class="abs" style="left:18.19999999999999px;top:178.1px;font-size:7px;line-height:1;color:#2f3ae0;white-space:nowrap">Proceeds from Loans</div>
<div class="abs" style="left:108.2px;width:150px;top:178.1px;font-size:7px;line-height:1;color:#222;white-space:nowrap;text-align:right;">0.00</div>
<div class="abs" style="left:165.0px;width:150px;top:178.1px;font-size:7px;line-height:1;color:#222;white-space:nowrap;text-align:right;">0.00</div>
<div class="abs" style="left:218.0px;width:150px;top:178.1px;font-size:7px;line-height:1;color:#222;white-space:nowrap;text-align:right;">0.00</div>
<div class="abs" style="left:274.5px;width:150px;top:178.1px;font-size:7px;line-height:1;color:#222;white-space:nowrap;text-align:right;">0.00</div>
</div>
<div class="abs" style="left:573.0px;top:372.5px;width:7.5px;height:176.5px;background:#fafafa;border-left:1px solid #eee"></div>
<div class="abs" style="left:575.0px;top:374.0px;width:4.5px;height:126.5px;background:#c1c1c1;border-radius:2px"></div>
<div class="abs" style="left:157.2px;top:549.0px;width:415.3px;height:10.0px;background:#fff"></div>
<div class="abs" style="left:159.3px;top:551.8px;width:347.1px;height:6.0px;background:#c1c1c1;border-radius:3px"></div>
<div class="abs" style="left:598.3px;top:325.5px;width:444.0px;height:163.5px;background:#fff;border:1px solid #dadada;border-bottom-color:#d0d0d0;border-radius:2px"></div>
<svg class="abs" style="left:606.5px;top:337.0px" width="7" height="5" viewBox="0 0 7 5"><path d="M0.6 0.8L3.5 3.9L6.4 0.8" fill="none" stroke="#888" stroke-width="0.8"/></svg>
<div class="abs" style="left:622.0px;top:334.1px;font-size:10.3px;line-height:1;color:#555;white-space:nowrap;">Company</div>
<div class="abs" style="left:605.3px;top:351.2px;width:430.9px;height:1.0px;background:#dcdcdc"></div>
<svg class="abs" style="left:990.0px;top:334.3px" width="8" height="8" viewBox="0 0 8 8"><path d="M1.2 3.3A2.9 2.9 0 0 1 6.4 2.2" fill="none" stroke="#4a4a4a" stroke-width="1.3"/><path d="M7.8 0.6V3.6H4.8Z" fill="#4a4a4a"/><path d="M6.8 4.7A2.9 2.9 0 0 1 1.6 5.8" fill="none" stroke="#4a4a4a" stroke-width="1.3"/><path d="M0.2 7.4V4.4H3.2Z" fill="#4a4a4a"/></svg>
<svg class="abs" style="left:1000.0px;top:334.3px" width="9" height="8" viewBox="0 0 9 8"><path d="M5 1.2H1V7.4H7.2V4" fill="none" stroke="#4a4a4a" stroke-width="0.9"/><path d="M4 4.6L8 0.6M5.4 0.6H8.2V3.4" fill="none" stroke="#4a4a4a" stroke-width="0.9"/></svg>
<svg class="abs" style="left:1012.0px;top:334.3px" width="8" height="8" viewBox="0 0 8 8"><g fill="#4a4a4a"><circle cx="4" cy="4" r="2.6"/><rect x="3.1" y="0" width="1.8" height="8"/><rect x="0" y="3.1" width="8" height="1.8"/><rect x="3.1" y="0" width="1.8" height="8" transform="rotate(45 4 4)"/><rect x="3.1" y="0" width="1.8" height="8" transform="rotate(-45 4 4)"/></g><circle cx="4" cy="4" r="1" fill="#fff"/></svg>
<svg class="abs" style="left:1023.0px;top:334.3px" width="7.5" height="8" viewBox="0 0 7.5 8"><path d="M0.2 1.7H7.3M2.6 1.5V0.5H4.9V1.5" fill="none" stroke="#888" stroke-width="0.8"/><path d="M1 2.4H6.5L6.1 7.6H1.4Z" fill="none" stroke="#888" stroke-width="0.8"/><path d="M2.8 3.2V6.8M4.7 3.2V6.8" stroke="#aaa" stroke-width="0.6"/></svg>
<svg class="abs" style="left:619.8px;top:379.5px" width="10" height="7" viewBox="0 0 10 7"><path d="M5 0.6C7.4 0.6 9.4 1.8 9.4 3.2C9.4 4.6 7.4 5.7 5 5.7C4.4 5.7 3.9 5.6 3.4 5.5L1 6.6L1.9 5C1 4.5 0.6 3.9 0.6 3.2C0.6 1.8 2.6 0.6 5 0.6Z" fill="none" stroke="#5fb04a" stroke-width="0.8"/></svg>
<div class="abs" style="left:630.7px;top:378.7px;font-size:7.4px;line-height:1;color:#1f5eaa;white-space:nowrap;font-weight:bold">Post</div>
<svg class="abs" style="left:658.5px;top:378.2px" width="7" height="9" viewBox="0 0 7 9"><path d="M0.5 0.5H4.5L6.5 2.5V8.5H0.5Z" fill="#eaf5e4" stroke="#5fb04a" stroke-width="0.8"/><path d="M2 4.5H5M2 6H5" stroke="#5fb04a" stroke-width="0.6"/></svg>
<div class="abs" style="left:666.9px;top:378.7px;font-size:7.4px;line-height:1;color:#1f5eaa;white-space:nowrap;font-weight:bold">File</div>
<svg class="abs" style="left:691.8px;top:378.8px" width="7" height="8" viewBox="0 0 7 8"><circle cx="2" cy="2" r="1.4" fill="none" stroke="#5fb04a" stroke-width="0.9"/><circle cx="5" cy="6" r="1.4" fill="none" stroke="#5fb04a" stroke-width="0.9"/><path d="M2.8 3L4.2 5" stroke="#5fb04a" stroke-width="0.9"/></svg>
<div class="abs" style="left:700.5px;top:378.7px;font-size:7.4px;line-height:1;color:#1f5eaa;white-space:nowrap;font-weight:bold">Link</div>
<svg class="abs" style="left:728.0px;top:378.8px" width="9" height="8" viewBox="0 0 9 8"><path d="M0.3 2H2.5L3.3 0.6H5.7L6.5 2H8.7V7.6H0.3Z" fill="#5fb04a"/><circle cx="4.5" cy="4.6" r="1.7" fill="#fff"/><circle cx="4.5" cy="4.6" r="1" fill="#5fb04a"/></svg>
<div class="abs" style="left:739.0px;top:378.7px;font-size:7.4px;line-height:1;color:#1f5eaa;white-space:nowrap;font-weight:bold">Snapshot</div>
<div class="abs" style="left:619.8px;top:394.3px;width:336.2px;height:19.2px;background:#fff;border:1px solid #d8d8d8;border-radius:2px"></div>
<svg class="abs" style="left:627.0px;top:390.0px" width="10" height="5" viewBox="0 0 10 5"><path d="M0 4.6L5 0.5L10 4.6" fill="#fff" stroke="#d8d8d8" stroke-width="0.8"/></svg>
<div class="abs" style="left:625.3px;top:400.9px;font-size:7.5px;line-height:1;color:#999;white-space:nowrap;">Write something</div>
<div class="abs" style="left:967.2px;top:393.6px;width:37.8px;height:19.9px;background:linear-gradient(#84b536,#76a82a);border:1px solid #6f9e26;border-radius:2px"></div>
<div class="abs" style="left:886.1px;width:200px;top:399.9px;font-size:7.9px;line-height:1;color:#fff;white-space:nowrap;text-align:center;font-weight:bold">Share</div>
<div class="abs" style="left:605px;top:362px;width:420px;height:122px;overflow:hidden">
<svg class="abs" style="left:15px;top:65.1px" width="29" height="30" viewBox="0 0 29 30"><rect x="0" y="0" width="28.4" height="29.7" fill="#7f97b0"/><rect x="0" y="0" width="28.4" height="2" fill="#9aaec2"/><circle cx="14.1" cy="11.3" r="4.2" fill="#fff"/><path d="M6.8 23.3V20.5C6.8 18.5 9 17.3 11 17.3H17.2C19.2 17.3 21.4 18.5 21.4 20.5V23.3Z" fill="#fff"/></svg>
<div class="abs" style="left:52.39999999999998px;top:66.7px;font-size:7.6px;line-height:1;white-space:nowrap;color:#1f5eaa"><b>Sales Order: Sales Order-SO-0048</b> — Bob Shawgo</div>
<div class="abs" style="left:52.39999999999998px;top:79.5px;font-size:7.6px;line-height:1;white-space:nowrap;color:#333">Can you attach the Purchase Order?</div>
<div class="abs" style="left:52.39999999999998px;top:91.9px;font-size:6.9px;line-height:1;white-space:nowrap;color:#888"><span style="color:#2a6fc0">Comment</span><span style="margin:0 3.2px">·</span><span style="color:#2a6fc0">Like</span><span style="margin:0 3.2px">·</span>on February 2, 2018</div>
<svg class="abs" style="left:15px;top:113.2px" width="29" height="30" viewBox="0 0 29 30"><rect x="0" y="0" width="28.4" height="29.7" fill="#7f97b0"/><rect x="0" y="0" width="28.4" height="2" fill="#9aaec2"/><circle cx="14.1" cy="11.3" r="4.2" fill="#fff"/><path d="M6.8 23.3V20.5C6.8 18.5 9 17.3 11 17.3H17.2C19.2 17.3 21.4 18.5 21.4 20.5V23.3Z" fill="#fff"/></svg>
<div class="abs" style="left:52.39999999999998px;top:113.5px;font-size:7.6px;line-height:1;white-space:nowrap;color:#1f5eaa"><b>Purchase Order: Purchase Order-PO-000055</b> — Bob Shawgo</div>
</div>
<div class="abs" style="left:1025.0px;top:362.0px;width:7.0px;height:122.0px;background:#f7f7f7;border-left:1px solid #eee"></div>
<div class="abs" style="left:1026.2px;top:364.0px;width:4.4px;height:46.0px;background:#c1c1c1;border-radius:2px"></div>
<div class="abs" style="left:598.3px;top:496.3px;width:444.0px;height:103.7px;background:#fff;border:1px solid #dadada;border-bottom-color:#d0d0d0;border-radius:2px"></div>
<svg class="abs" style="left:606.8px;top:513.5px" width="7" height="5" viewBox="0 0 7 5"><path d="M0.6 0.8L3.5 3.9L6.4 0.8" fill="none" stroke="#888" stroke-width="0.8"/></svg>
<div class="abs" style="left:622.6px;top:505.8px;font-size:10.3px;line-height:1;color:#555;white-space:nowrap;">Revenue per SqFt by Location</div>
<div class="abs" style="left:622.6px;top:519.5px;font-size:6.8px;line-height:1;color:#555;white-space:nowrap;">05/07/2018 03:30</div>
<div class="abs" style="left:605.3px;top:533.0px;width:431.5px;height:1.0px;background:#e2e2e2;height:2px"></div>
<svg class="abs" style="left:962.3px;top:508.0px" width="8" height="7" viewBox="0 0 8 7"><path d="M0.3 0.2H7.7V1.6L5 3V6.8L3.2 5.8V3L0.3 1.6Z" fill="#4a4a4a"/></svg>
<svg class="abs" style="left:978.8px;top:510.5px" width="8" height="8" viewBox="0 0 8 8"><path d="M6.2 0.2L7.8 1.8L2.8 6.8L0.2 7.8L1.2 5.2Z" fill="#4a4a4a"/><path d="M1.3 5.3L2.7 6.7M5.2 1.2L6.8 2.8" stroke="#fff" stroke-width="0.45"/></svg>
<svg class="abs" style="left:989.8px;top:510.5px" width="8" height="8" viewBox="0 0 8 8"><path d="M1.2 3.3A2.9 2.9 0 0 1 6.4 2.2" fill="none" stroke="#4a4a4a" stroke-width="1.3"/><path d="M7.8 0.6V3.6H4.8Z" fill="#4a4a4a"/><path d="M6.8 4.7A2.9 2.9 0 0 1 1.6 5.8" fill="none" stroke="#4a4a4a" stroke-width="1.3"/><path d="M0.2 7.4V4.4H3.2Z" fill="#4a4a4a"/></svg>
<svg class="abs" style="left:1000.8px;top:510.5px" width="8" height="8" viewBox="0 0 8 8"><circle cx="3.3" cy="3.3" r="2.6" fill="none" stroke="#4a4a4a" stroke-width="1.2"/><path d="M5.2 5.2L7.6 7.6" stroke="#4a4a4a" stroke-width="1.4"/></svg>
<svg class="abs" style="left:1011.8px;top:510.5px" width="8" height="8" viewBox="0 0 8 8"><g fill="#4a4a4a"><circle cx="4" cy="4" r="2.6"/><rect x="3.1" y="0" width="1.8" height="8"/><rect x="0" y="3.1" width="8" height="1.8"/><rect x="3.1" y="0" width="1.8" height="8" transform="rotate(45 4 4)"/><rect x="3.1" y="0" width="1.8" height="8" transform="rotate(-45 4 4)"/></g><circle cx="4" cy="4" r="1" fill="#fff"/></svg>
<svg class="abs" style="left:1022.8px;top:510.5px" width="7.5" height="8" viewBox="0 0 7.5 8"><path d="M0.2 1.7H7.3M2.6 1.5V0.5H4.9V1.5" fill="none" stroke="#888" stroke-width="0.8"/><path d="M1 2.4H6.5L6.1 7.6H1.4Z" fill="none" stroke="#888" stroke-width="0.8"/><path d="M2.8 3.2V6.8M4.7 3.2V6.8" stroke="#aaa" stroke-width="0.6"/></svg>
<div class="abs" style="left:605.3px;top:535.0px;width:431.4px;height:65.0px;background:#f8f8f8"></div>
<div class="abs" style="left:640.5px;top:544.0px;width:386.1px;height:56.0px;background:#fff;border-left:1px solid #e0e0e0;border-right:1px solid #e6e6e6"></div>
<div class="abs" style="left:641.5px;top:564.5px;width:384.1px;height:35.5px;background:#f3f3f3"></div>
<div class="abs" style="left:640.5px;top:544.0px;width:386.1px;height:0.8px;background:#e6e6e6"></div>
<div class="abs" style="left:640.5px;top:564.3px;width:386.1px;height:0.7px;background:#e6e6e6"></div>
<div class="abs" style="right:422.2px;top:541.1px;font-size:6.5px;line-height:1;color:#333;white-space:nowrap;text-align:right;">$3,000</div>
<div class="abs" style="right:422.2px;top:561.3px;font-size:6.5px;line-height:1;color:#333;white-space:nowrap;text-align:right;">$2,400</div>
<div class="abs" style="left:1018.2px;top:538.0px;width:11.8px;height:11.5px;background:linear-gradient(#f4f4f4,#dedede);border:1px solid #cfcfcf;border-radius:1px"></div>
<svg class="abs" style="left:1020.7px;top:540.0px" width="7" height="8" viewBox="0 0 7 8"><path d="M3.5 0.5V5M1.8 3.4L3.5 5.2L5.2 3.4M0.5 5.5V7H6.5V5.5" fill="none" stroke="#777" stroke-width="0.8"/></svg>
<!--/PANELS-->
<div class="abs" style="left:1057px;top:24px;width:1px;height:546px;background:#f8f8f8"></div><div class="abs" style="left:1058px;top:24px;width:1px;height:546px;background:#d9d9d9"></div><div class="abs" style="left:1059px;top:24px;width:1px;height:546px;background:#fafafa"></div><div class="abs" style="left:992px;top:0;width:68px;height:1px;background:#fff"></div><div class="abs" style="left:0;top:523.5px;width:1.5px;height:1.5px;background:#444"></div>
</div></body></html>
